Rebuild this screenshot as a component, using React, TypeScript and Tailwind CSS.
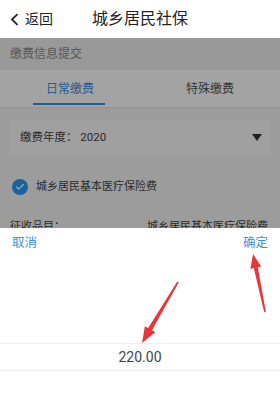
import { Check } from "lucide-react";

const font = { fontFamily: 'Roboto, "Noto Sans CJK SC", sans-serif' };

function Arrows() {
  return (
    <svg className="pointer-events-none absolute inset-0" width="280" height="404" viewBox="0 0 280 404">
      <polygon
        fill="#e8353b"
        points="142,343 155.3,332.2 152,330.3 178.7,282.4 177.3,281.6 148.2,328.1 144.9,326.2"
      />
      <polygon
        fill="#e8353b"
        points="253,254 261.2,266.6 257.8,267.3 265.8,311.8 264.2,312.2 253.8,268.1 250.4,268.8"
      />
    </svg>
  );
}

export default function App() {
  return (
    <div className="relative h-[404px] w-[280px] overflow-hidden bg-[#f5f5f5]" style={font}>
      {/* Title bar */}
      <header className="grid h-[38px] grid-cols-[1fr_auto_1fr] items-center bg-white px-[10px]">
        <div className="flex items-center gap-[6px] text-[14px] text-[#222]">
          <svg width="9" height="13" viewBox="0 0 9 13">
            <path d="M7.5 1.2 L2 6.5 L7.5 11.8" fill="none" stroke="#222" strokeWidth="1.8" />
          </svg>
          <span>返回</span>
        </div>
        <h1 className="text-[16px] text-[#222]">城乡居民社保</h1>
        <div />
      </header>

      {/* Page beneath the dim layer */}
      <div className="flex h-[32px] items-center bg-[#efefef] px-[10px] text-[12px] text-[#8a8a8a]">
        缴费信息提交
      </div>
      <div className="flex h-[38px] border-b border-[#e6e6e6] bg-white text-[12px]">
        <div className="relative flex flex-1 items-center justify-center text-[#3d8fe0]">
          日常缴费
          <span className="absolute bottom-[2px] left-[33px] h-[2px] w-[72px] bg-[#3d8fe0]" />
        </div>
        <div className="flex flex-1 items-center justify-center text-[#555]">特殊缴费</div>
      </div>

      <div className="px-[10px] pt-[12px]">
        <div className="flex h-[35px] items-center justify-between bg-[#fbfbfb] pl-[10px] pr-[8px] text-[11.5px] text-[#444]">
          <span>缴费年度： 2020</span>
          <svg width="10" height="7" viewBox="0 0 10 7">
            <polygon points="0,0 10,0 5,7" fill="#333" />
          </svg>
        </div>
        <div className="mt-[15px] flex h-[34px] items-center gap-[8px] pl-[2px] text-[11px] text-[#444]">
          <span className="flex h-[16px] w-[16px] items-center justify-center rounded-full bg-[#2b9af5]">
            <Check size={10} strokeWidth={3} color="#fff" />
          </span>
          <span>城乡居民基本医疗保险费</span>
        </div>
        <div className="mt-[15px] flex justify-between pr-[2px] text-[11px] text-[#444]">
          <span>征收品目：</span>
          <span>城乡居民基本医疗保险费</span>
        </div>
      </div>

      {/* Dim layer */}
      <div className="absolute inset-x-0 top-[38px] bottom-0 bg-black/[0.36]" />

      {/* Picker sheet */}
      <div className="absolute inset-x-0 top-[228px] bottom-0 flex flex-col bg-white">
        <div className="flex h-[30px] items-center justify-between px-[12px] text-[12.5px] text-[#3d8fe0]">
          <span>取消</span>
          <span>确定</span>
        </div>
        <div className="mt-[85px] flex h-[28px] items-center justify-center border-y border-[#efefef] text-[14px] text-[#444]">
          220.00
        </div>
      </div>

      <Arrows />
    </div>
  );
}
